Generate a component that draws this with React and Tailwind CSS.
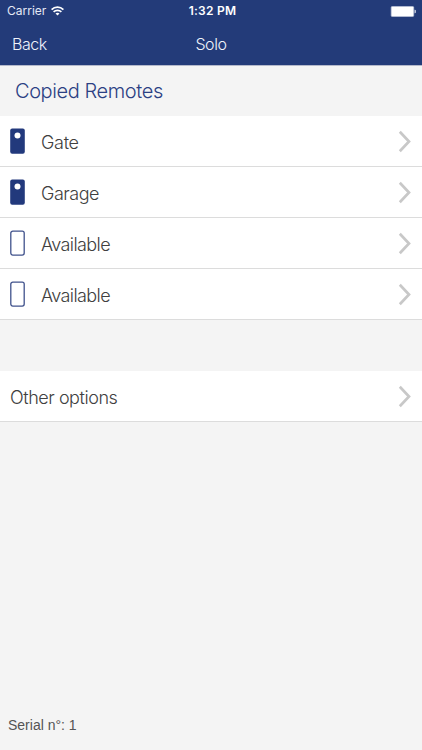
function Chevron() {
  return (
    <svg className="ml-auto h-[23px] w-[13px] shrink-0" viewBox="0 0 13 23" fill="none" stroke="#c8c8c8" strokeWidth="2.7">
      <path d="M1.8 1.8 11 11.5 1.8 21.2" />
    </svg>
  );
}

function RemoteIcon({ filled }) {
  return (
    <svg className="mr-[16px] h-[26px] w-[15px] shrink-0" viewBox="0 0 15 26">
      {filled ? (
        <>
          <rect x="0.2" y="0.6" width="14.6" height="25.2" rx="2" fill="#22397c" />
          <circle cx="7.5" cy="7.6" r="3" fill="#fff" />
        </>
      ) : (
        <rect x="0.8" y="1.1" width="13.4" height="24" rx="2" fill="#fff" stroke="#40528c" strokeWidth="1.3" />
      )}
    </svg>
  );
}

function Row({ children }) {
  return (
    <div className="flex h-[51px] items-center border-b border-[#dcdcdc] bg-white pl-[10px] pr-[11px] text-[18px] font-light text-[#404040]">
      {children}
      <Chevron />
    </div>
  );
}

const remotes = [
  { name: "Gate", filled: true, spacing: "tracking-[-0.3px]" },
  { name: "Garage", filled: true, spacing: "tracking-[-0.5px]" },
  { name: "Available", filled: false, spacing: "tracking-[-0.6px]" },
  { name: "Available", filled: false, spacing: "tracking-[-0.6px]" },
];

export default function App() {
  return (
    <div className="flex h-[750px] w-[422px] flex-col overflow-hidden bg-[#f4f4f4] font-['Inter','Liberation_Sans',sans-serif]">
      <header className="h-[66px] border-b border-[#b4b9cb] bg-[#233b79] text-white">
        <div className="grid h-[22px] grid-cols-3 items-center pl-[7px] pr-[6px] text-[12px]">
          <div className="flex items-center gap-[5px] tracking-[0px] text-[#e5e9f5]">
            <span>Carrier</span>
            <svg className="h-[10px] w-[13px]" viewBox="0 0 13 10" fill="none" stroke="#fff" strokeWidth="1.7">
              <path d="M.6 3.6a8.5 8.5 0 0 1 11.8 0M2.6 5.9a5.6 5.6 0 0 1 7.8 0" />
              <path d="M6.5 9.6 4.5 7.6a2.9 2.9 0 0 1 4 0Z" fill="#fff" stroke="none" />
            </svg>
          </div>
          <div className="whitespace-nowrap pl-[2px] text-center font-semibold tracking-[0.25px]">1:32 PM</div>
          <svg className="ml-auto h-[11px] w-[26px]" viewBox="0 0 26 11">
            <rect x="1.2" y="0.5" width="22.5" height="10" rx="1" fill="#fff" stroke="#bdc5da" strokeWidth="0.7" />
            <path d="M24.5 3.8h.4q1 0 1 1v1.4q0 1-1 1h-.4Z" fill="#cbd2e3" />
          </svg>
        </div>
        <div className="grid h-[43px] grid-cols-3 items-center px-[12px] text-[16px] font-light text-[#f0f3fb]">
          <span className="tracking-[-0.5px]">Back</span>
          <span className="text-center tracking-[-0.4px]">Solo</span>
        </div>
      </header>
      <h1 className="flex h-[50px] items-center pl-[15px] text-[20px] font-light tracking-[-0.4px] text-[#2b4083]">
        Copied Remotes
      </h1>
      <main>
        {remotes.map((r, i) => (
          <Row key={i}>
            <RemoteIcon filled={r.filled} />
            <span className={`pt-[2px] ${r.spacing}`}>{r.name}</span>
          </Row>
        ))}
        <div className="mt-[51px]">
          <Row>
            <span className="pt-[2px] tracking-[-0.45px]">Other options</span>
          </Row>
        </div>
      </main>
      <footer className="mt-auto flex h-[50px] items-center pl-[8px] font-['Liberation_Sans',sans-serif] text-[14px] text-[#555]">
        Serial n°: 1
      </footer>
    </div>
  );
}
